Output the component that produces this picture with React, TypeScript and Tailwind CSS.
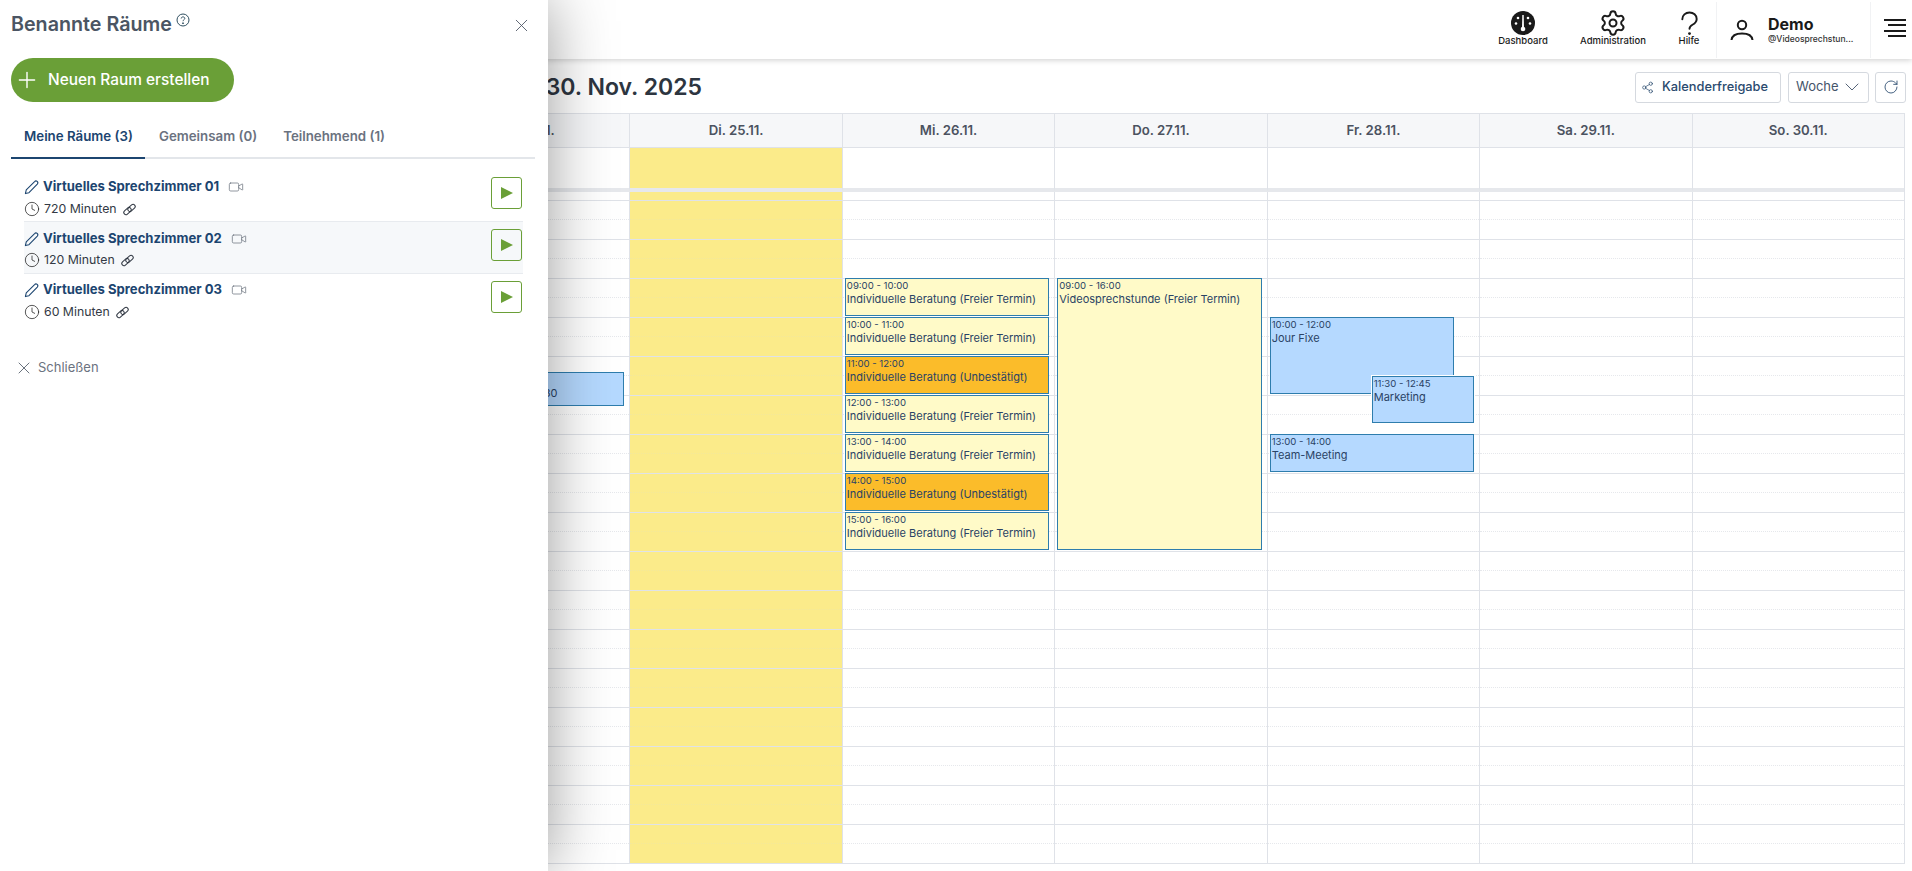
import React from 'react';
import { ChevronDown, Clock, Plus, RotateCw, Settings, Share2, Video, X } from 'lucide-react';

type CalEvent = {
  start: number;
  end: number;
  time: string;
  title: string;
  left: number;
  right: number;
  color: string;
  z?: string;
};

const HOUR = 39;

const free = 'bg-[#fffac8]';
const pending = 'bg-[#fbbc2a]';
const meeting = 'bg-[#b5d9ff]';

const days: { label: string; today?: boolean; events: CalEvent[] }[] = [
  {
    label: 'Mo. 24.11.',
    events: [
      { start: 11.4, end: 12.3, time: '11:30 - 12:30', title: 'Projektbesprechung 2030', left: 2, right: 5, color: meeting },
    ],
  },
  { label: 'Di. 25.11.', today: true, events: [] },
  {
    label: 'Mi. 26.11.',
    events: [
      { start: 9, end: 10, time: '09:00 - 10:00', title: 'Individuelle Beratung (Freier Termin)', left: 2, right: 5, color: free },
      { start: 10, end: 11, time: '10:00 - 11:00', title: 'Individuelle Beratung (Freier Termin)', left: 2, right: 5, color: free },
      { start: 11, end: 12, time: '11:00 - 12:00', title: 'Individuelle Beratung (Unbestätigt)', left: 2, right: 5, color: pending },
      { start: 12, end: 13, time: '12:00 - 13:00', title: 'Individuelle Beratung (Freier Termin)', left: 2, right: 5, color: free },
      { start: 13, end: 14, time: '13:00 - 14:00', title: 'Individuelle Beratung (Freier Termin)', left: 2, right: 5, color: free },
      { start: 14, end: 15, time: '14:00 - 15:00', title: 'Individuelle Beratung (Unbestätigt)', left: 2, right: 5, color: pending },
      { start: 15, end: 16, time: '15:00 - 16:00', title: 'Individuelle Beratung (Freier Termin)', left: 2, right: 5, color: free },
    ],
  },
  {
    label: 'Do. 27.11.',
    events: [
      { start: 9, end: 16, time: '09:00 - 16:00', title: 'Videosprechstunde (Freier Termin)', left: 2, right: 5, color: free },
    ],
  },
  {
    label: 'Fr. 28.11.',
    events: [
      { start: 10, end: 12, time: '10:00 - 12:00', title: 'Jour Fixe', left: 2, right: 25, color: meeting },
      { start: 11.5, end: 12.75, time: '11:30 - 12:45', title: 'Marketing', left: 104, right: 5, color: meeting, z: 'z-10 outline outline-white' },
      { start: 13, end: 14, time: '13:00 - 14:00', title: 'Team-Meeting', left: 2, right: 5, color: meeting },
    ],
  },
  { label: 'Sa. 29.11.', events: [] },
  { label: 'So. 30.11.', events: [] },
];

const hours = Array.from({ length: 17 }, (_, i) => i);

const rooms = [
  { name: 'Virtuelles Sprechzimmer 01', mins: '720 Minuten', alt: false, last: false, top: 'pt-[7px]', sub: 'mt-[4px]' },
  { name: 'Virtuelles Sprechzimmer 02', mins: '120 Minuten', alt: true, last: false, top: 'pt-[7px]', sub: 'mt-[3px]' },
  { name: 'Virtuelles Sprechzimmer 03', mins: '60 Minuten', alt: false, last: true, top: 'pt-[6px]', sub: 'mt-[4px]' },
];

const LinkIcon = () => (
  <svg viewBox="0 0 16 16" className="h-[15px] w-[15px]" fill="none" stroke="#333a45" strokeWidth="1.100">
    <g transform="rotate(-42 8 8)">
      <rect x="0.800" y="5.500" width="9" height="4.600" rx="2.300" />
      <rect x="6.200" y="5.900" width="9" height="4.600" rx="2.300" />
    </g>
  </svg>
);

const PencilIcon = () => (
  <svg viewBox="0 0 16 16" className="h-[15px] w-[15px]" fill="none" stroke="#1c4570" strokeWidth="1.150" strokeLinejoin="round">
    <path d="M1.500 14.500l.9-3.900L11.300 1.700a1.800 1.800 0 0 1 2.900 2.600L5.300 13.500z" />
  </svg>
);

const DashboardIcon = () => (
  <svg viewBox="0 0 24 24" className="h-6 w-6">
    <circle cx="12" cy="12" r="12" fill="#1a1a1a" />
    <path d="M11.300 4h1.400l.3 13h-2z" fill="#fff" />
    <circle cx="12" cy="18" r="2.300" fill="#fff" />
    <circle cx="7" cy="7" r="1.300" fill="#fff" />
    <circle cx="17" cy="7" r="1.300" fill="#fff" />
    <circle cx="5" cy="12.500" r="1.300" fill="#fff" />
    <circle cx="19" cy="12.500" r="1.300" fill="#fff" />
  </svg>
);

const HelpIcon = () => (
  <svg viewBox="0 0 24 26" className="h-[25px] w-[23px]" fill="none" stroke="#1a1a1a" strokeWidth="2" strokeLinecap="round">
    <path d="M4.500 8.500C4.500 4.400 7.800 1.500 12 1.500s7.500 2.900 7.500 6.700c0 3.300-2.200 4.800-4.400 6.100-1.900 1.100-3.100 2.100-3.100 4.200" />
    <circle cx="12" cy="23.500" r="1.500" fill="#1a1a1a" stroke="none" />
  </svg>
);

const UserIcon = () => (
  <svg viewBox="0 0 24 24" className="h-6 w-6" fill="none" stroke="#1a1a1a" strokeWidth="2">
    <circle cx="12" cy="7" r="4.200" />
    <path d="M1.500 22c.4-4 4-6.500 10.500-6.500S22.100 18 22.500 22" />
  </svg>
);

const NavItem = ({ icon, label, className }: { icon: React.ReactNode; label: string; className: string }) => (
  <div className={`flex h-full flex-col items-center pt-[10px] ${className}`}>
    <div className="flex h-[26px] items-center justify-center">{icon}</div>
    <span className="-mt-[1px] whitespace-nowrap text-[9.500px] leading-[12px] font-medium text-[#1a1a1a]">{label}</span>
  </div>
);

const TopBar = () => (
  <header className="relative z-10 flex h-[59px] items-center justify-end bg-white pr-[6px] shadow-[0_1px_6px_rgba(0,0,0,0.2)]">
    <NavItem icon={<DashboardIcon />} label="Dashboard" className="w-[70px]" />
    <NavItem
      icon={<Settings size={28} strokeWidth={1.7} color="#1a1a1a" />}
      label="Administration"
      className="ml-[20px] w-[70px]"
    />
    <NavItem icon={<HelpIcon />} label="Hilfe" className="ml-[26px] w-[30px]" />
    <div className="ml-[12px] flex h-[56px] w-[155px] items-center border-x border-[#f1f2f4] pl-[13px]">
      <UserIcon />
      <div className="ml-[14px] min-w-0">
        <div className="text-[16px] leading-[20px] font-bold text-[#1a1a1a]">Demo</div>
        <div className="text-[8.500px] leading-[11px] font-medium text-[#333]">@Videosprechstun...</div>
      </div>
    </div>
    <div className="ml-[13px] flex w-[22px] flex-col items-end gap-[3.500px] pb-[3px]">
      <span className="h-[2px] w-[22px] bg-[#1a1a1a]" />
      <span className="h-[2px] w-[18px] bg-[#1a1a1a]" />
      <span className="h-[2px] w-[22px] bg-[#1a1a1a]" />
      <span className="h-[2px] w-[18px] bg-[#1a1a1a]" />
    </div>
  </header>
);

const HourCells = ({ today }: { today?: boolean }) => (
  <>
    <div className="h-[9px] border-b border-[#dfe2e8]" />
    {hours.map((h) => (
      <div key={h} className="h-[39px] border-b border-[#dfe2e8]">
        <div className={`h-[19px] border-b border-dotted ${today ? 'border-[#f3e89a]' : 'border-[#e6e8ec]'}`} />
      </div>
    ))}
  </>
);

const EventBox = ({ ev }: { ev: CalEvent }) => (
  <div
    className={`absolute overflow-hidden border border-[#2e7dad] px-[1px] text-[#2a4365] ${ev.color} ${ev.z ?? ''}`}
    style={{
      top: 8 + (ev.start - 7) * HOUR,
      height: (ev.end - ev.start) * HOUR - 1,
      left: ev.left,
      right: ev.right,
    }}
  >
    <div className="mt-[1px] text-[9.600px] leading-[12px]">{ev.time}</div>
    <div className="whitespace-nowrap text-[11px] leading-[14px]">{ev.title}</div>
  </div>
);

const Calendar = () => (
  <main className="ml-[356px] mr-[7px]">
    <div className="flex h-[54px] items-center justify-between pt-[2px]">
      <h1 className="ml-[132px] text-[23px] font-semibold text-[#2d3540]">24. - 30. Nov. 2025</h1>
      <div className="mr-[-1px] flex items-center">
        <button className="flex h-[31px] w-[146px] items-center rounded-[3px] border border-[#d5d9df] pl-[5px] text-[12.800px] font-medium text-[#2a4a6e]">
          <Share2 size={13} strokeWidth={1.3} className="mr-[8px]" />
          Kalenderfreigabe
        </button>
        <button className="ml-[7px] flex h-[31px] w-[81px] items-center justify-between rounded-[3px] border border-[#d5d9df] pl-[7px] pr-[4px] text-[13px] text-[#44546a]">
          Woche
          <ChevronDown size={24} strokeWidth={0.9} />
        </button>
        <button className="ml-[6px] flex h-[31px] w-[31px] items-center justify-center rounded-[3px] border border-[#d5d9df] text-[#2a4a6e]">
          <RotateCw size={16} strokeWidth={1.3} />
        </button>
      </div>
    </div>

    <div className="grid grid-cols-[61px_repeat(7,1fr)] border-t border-r border-[#dfe2e8]">
      <div className="h-[34px] border-b border-l border-[#dfe2e8] bg-[#f6f7f9]" />
      {days.map((d) => (
        <div
          key={d.label}
          className="flex h-[34px] items-center justify-center border-b border-l border-[#dfe2e8] bg-[#f6f7f9] text-[13.200px] font-semibold text-[#4b5260]"
        >
          {d.label}
        </div>
      ))}

      <div className="h-[44px] border-l border-b-[4px] border-b-[#e6e8ec] border-[#dfe2e8]" />
      {days.map((d) => (
        <div
          key={d.label}
          className={`h-[44px] border-l border-b-[4px] border-b-[#e6e8ec] border-[#dfe2e8] ${d.today ? 'bg-[#fbeb8a]' : 'bg-white'}`}
        />
      ))}

      <div className="border-l border-[#dfe2e8]">
        <HourCells />
      </div>
      {days.map((d) => (
        <div
          key={d.label}
          className={`relative border-l border-[#dfe2e8] ${d.today ? 'bg-[#fbeb8a]' : 'bg-white'}`}
        >
          <HourCells today={d.today} />
          {d.events.map((ev) => (
            <EventBox key={ev.time} ev={ev} />
          ))}
        </div>
      ))}
    </div>
  </main>
);

const RoomRow = ({ room }: { room: (typeof rooms)[number] }) => (
  <div
    className={`flex h-[52px] justify-between ${room.last ? '' : 'border-b border-[#e8ebef]'} ${room.alt ? 'bg-[#f6f8fa]' : ''}`}
  >
    <div className={room.top}>
      <div className="flex h-[20px] items-center">
        <PencilIcon />
        <span className="ml-[4px] text-[13.100px] font-bold text-[#1c4570]">{room.name}</span>
        <Video size={16} strokeWidth={1} color="#5b6470" className="ml-[9px]" />
      </div>
      <div className={`flex h-[16px] items-center text-[12.300px] text-[#333a45] ${room.sub}`}>
        <Clock size={16} strokeWidth={1.1} color="#1a1a1a" />
        <span className="ml-[4px] mr-[5px]">{room.mins}</span>
        <LinkIcon />
      </div>
    </div>
    <button className="mt-[7px] mr-[1px] flex h-[32px] w-[31px] items-center justify-center rounded-[3px] border border-[#6a9f37]">
      <svg viewBox="0 0 12 12" className="h-[12px] w-[12px]">
        <path d="M0 0 12 6 0 12z" fill="#6a9f37" />
      </svg>
    </button>
  </div>
);

const RoomsPanel = () => (
  <aside className="absolute inset-y-0 left-0 z-20 flex w-[548px] flex-col bg-white shadow-[0_0_60px_rgba(0,0,0,0.4)]">
    <div className="flex h-[48px] items-start justify-between pl-[11px] pr-[16px]">
      <div className="flex pt-[9px]">
        <h2 className="text-[19.700px] leading-[30px] font-semibold text-[#4b5563]">Benannte Räume</h2>
        <svg viewBox="0 0 14 14" className="ml-[4px] mt-[4px] h-[14px] w-[14px]" fill="none" stroke="#2f4f60">
          <circle cx="7" cy="7" r="6" />
          <path d="M5.200 5.500c0-1 .8-1.600 1.800-1.600s1.800.6 1.800 1.500c0 1.300-1.800 1.300-1.800 2.800" />
          <circle cx="7" cy="10.200" r=".5" fill="#2f4f60" />
        </svg>
      </div>
      <X size={21} strokeWidth={1} color="#4b5563" className="mt-[15px]" />
    </div>

    <button className="ml-[11px] mt-[10px] flex h-[44px] w-[223px] items-center rounded-full bg-[#6a9f37] pl-[3px] text-[15.400px] font-medium text-white">
      <Plus size={26} strokeWidth={1.3} />
      <span className="ml-[8px]">Neuen Raum erstellen</span>
    </button>

    <div className="ml-[11px] mr-[13px] mt-[20px] flex h-[37px] border-b-2 border-[#e3e6ea] text-[13.300px] font-semibold">
      <div className="-mb-[2px] border-b-2 border-[#1c4570] pl-[13px] pr-[12px] pt-[5px] text-[#1c4570]">Meine Räume (3)</div>
      <div className="pl-[14px] pr-[13px] pt-[5px] text-[#6b7280]">Gemeinsam (0)</div>
      <div className="px-[13px] pt-[5px] text-[#6b7280]">Teilnehmend (1)</div>
    </div>

    <div className="ml-[24px] mr-[25px] mt-[11px]">
      {rooms.map((r) => (
        <RoomRow key={r.name} room={r} />
      ))}
    </div>

    <div className="ml-[14px] mt-[32px] flex items-center text-[13px] text-[#6b7280]">
      <X size={20} strokeWidth={1} color="#4b5563" />
      <span className="ml-[4px]">Schließen</span>
    </div>
  </aside>
);

export default function App() {
  return (
    <div className="relative h-[871px] w-[1912px] overflow-hidden bg-white font-['Inter',sans-serif]">
      <TopBar />
      <Calendar />
      <RoomsPanel />
    </div>
  );
}
